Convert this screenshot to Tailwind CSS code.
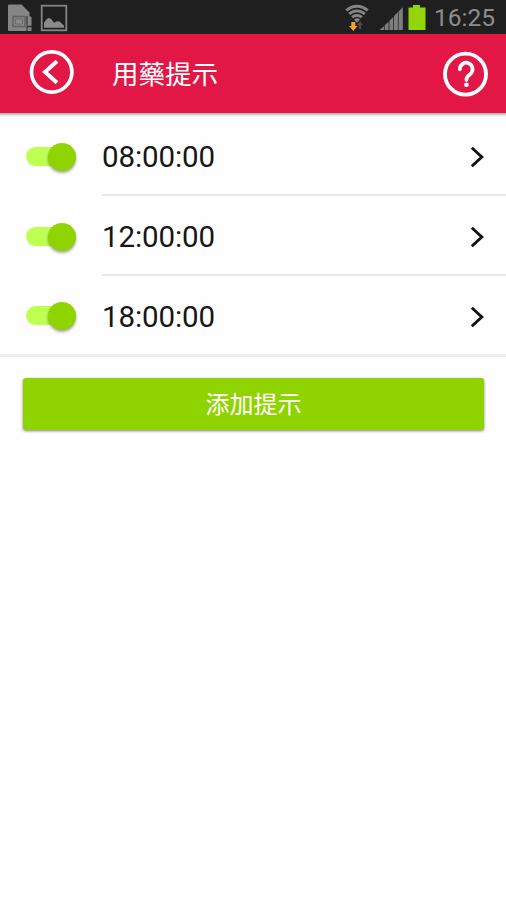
<!DOCTYPE html>
<html lang="zh-Hant">
<head>
<meta charset="utf-8">
<title>用藥提示</title>
<script src="https://cdn.jsdelivr.net/npm/@tailwindcss/browser@4"></script>
</head>
<body class="bg-white">
<div class="flex h-[900px] w-[506px] flex-col overflow-hidden bg-[#fefefe] font-['Roboto','Noto_Sans_CJK_TC',sans-serif]">
  <!-- Status bar -->
  <div class="flex h-[34px] shrink-0 items-start bg-[#1f1f20] pl-[7px]">
    <svg class="mt-[3px] h-[30px] w-[64px]" viewBox="7 3 64 30">
      <path d="M9 4.500h12.500l8 8V16l2 1v14H9a1 1 0 0 1-1-1V5.500a1 1 0 0 1 1-1z" fill="#858585"/>
      <path d="M13 16.500h12v10H13z" fill="#858585" stroke="#626262" stroke-width="1.500"/>
      <path d="M15.500 19h7v5h-7z" fill="#8c8c8c" stroke="#6a6a6a" stroke-width="1"/>
      <path d="M27 16v9.500" stroke="#404040" stroke-width="1.300"/>
      <path d="M26.500 26.500h5.500" stroke="#303030" stroke-width="1.400"/>
      <path d="M27 27v4" stroke="#303030" stroke-width="1"/>
      <rect x="41.700" y="5.700" width="24.600" height="24.600" fill="none" stroke="#858585" stroke-width="1.800"/>
      <path d="M44 27.800v-5l3-4 2-.800 2 .800 3 4 3-1.500 3 .500 4 4v2z" fill="#8a8a8a"/>
    </svg>
    <svg class="ml-auto mt-[3px] h-[30px] w-[90px]" viewBox="340 3 90 30">
      <g fill="none" stroke="#858585" stroke-width="2.900">
        <path d="M346.300 10.500a15.500 15.500 0 0 1 21.400 0"/>
        <path d="M349.200 14a11.200 11.200 0 0 1 15.600 0"/>
        <path d="M352.200 17.300a7 7 0 0 1 9.600 0"/>
      </g>
      <path d="M354 19.500a4.600 4.600 0 0 1 6 0l-3 3.200z" fill="#858585"/>
      <path d="M351.300 22h4v4h2.200l-4.200 5-4.200-5h2.200z" fill="#f5a12c"/>
      <path d="M358.800 29v-4h-1.800l3-3.800 3 3.800h-1.800v4z" fill="#4a4a4a"/>
      <g fill="#7e7e7e">
        <path d="M379.500 30l4.500-3.700V30zM384.700 25.300l3.900-3.500V30h-3.900zM389.400 20.800l3.900-3.800v13h-3.900zM394 16l3.900-3.900V30H394zM398.600 11.400l4.200-4.100V30h-4.200z"/>
      </g>
      <path d="M413 5h7v2.500h5.500V30h-17V7.500h4.500z" fill="#94d40b"/>
    </svg>
    <div class="ml-[4px] w-[72px] text-[24.500px] leading-[36px] text-[#8d8d8d]">16:25</div>
  </div>

  <!-- App bar -->
  <header class="z-10 flex h-[79px] shrink-0 items-center bg-[#e21745] pl-[29px] pr-[17px] shadow-[0_1px_2px_1px_rgba(60,75,50,0.4)]">
    <svg class="-mt-[3px] size-[46px]" viewBox="0 0 46 46" fill="none" stroke="#fff">
      <circle cx="22.700" cy="23" r="20.200" stroke-width="3.700"/>
      <path d="M28 12.200L16 23l12 10.800" stroke-width="3.900"/>
    </svg>
    <h1 class="ml-[37px] pt-[2px] text-[26.500px] leading-[40px] text-white">用藥提示</h1>
    <svg class="ml-auto size-[46px]" viewBox="0 0 46 46" fill="none" stroke="#fff">
      <circle cx="22.500" cy="23.200" r="20.500" stroke-width="3.800"/>
      <path d="M16.800 18.300a6.400 6.400 0 1 1 10.500 4.800c-2.200 1.800-3.900 2.700-3.900 5.700" stroke-width="3.700" stroke-linecap="round"/>
      <circle cx="23.400" cy="33.800" r="2.300" fill="#fff" stroke="none"/>
    </svg>
  </header>

  <!-- Reminder times -->
  <ul class="shrink-0 border-b-[3px] border-[#eeeeee] pt-[2px]">
    <li class="flex h-[81px] pl-[26px]">
      <div class="mt-[32px] flex h-[19px] w-[50px] items-center justify-end rounded-full bg-[#beff52]">
        <span class="size-[28px] shrink-0 rounded-full bg-[#8fd300] shadow-[0_2px_3px_rgba(0,0,0,0.35)]"></span>
      </div>
      <div class="ml-[26px] flex flex-1 items-center justify-between border-b-2 border-[#e8e8e8] pr-[21px] pt-[5px]">
        <span class="text-[29.500px] leading-[40px] tracking-[-0.1px] text-[#161616]">08:00:00</span>
        <svg class="h-[22px] w-[15px]" viewBox="0 0 15 22" fill="none" stroke="#111" stroke-width="2.900"><path d="M1.800 1.700L11.800 11 1.800 20.300"/></svg>
      </div>
    </li>
    <li class="flex h-[80px] pl-[26px]">
      <div class="mt-[31px] flex h-[19px] w-[50px] items-center justify-end rounded-full bg-[#beff52]">
        <span class="size-[28px] shrink-0 rounded-full bg-[#8fd300] shadow-[0_2px_3px_rgba(0,0,0,0.35)]"></span>
      </div>
      <div class="ml-[26px] flex flex-1 items-center justify-between border-b-2 border-[#e8e8e8] pr-[21px] pt-[4px]">
        <span class="text-[29.500px] leading-[40px] tracking-[-0.1px] text-[#161616]">12:00:00</span>
        <svg class="h-[22px] w-[15px]" viewBox="0 0 15 22" fill="none" stroke="#111" stroke-width="2.900"><path d="M1.800 1.700L11.800 11 1.800 20.300"/></svg>
      </div>
    </li>
    <li class="flex h-[78px] pl-[26px]">
      <div class="mt-[30px] flex h-[19px] w-[50px] items-center justify-end rounded-full bg-[#beff52]">
        <span class="size-[28px] shrink-0 rounded-full bg-[#8fd300] shadow-[0_2px_3px_rgba(0,0,0,0.35)]"></span>
      </div>
      <div class="ml-[26px] flex flex-1 items-center justify-between pr-[21px] pt-[4px]">
        <span class="text-[29.500px] leading-[40px] tracking-[-0.1px] text-[#161616]">18:00:00</span>
        <svg class="h-[22px] w-[15px]" viewBox="0 0 15 22" fill="none" stroke="#111" stroke-width="2.900"><path d="M1.800 1.700L11.800 11 1.800 20.300"/></svg>
      </div>
    </li>
  </ul>

  <button class="ml-[23px] mt-[21px] h-[52px] w-[461px] shrink-0 rounded-[3px] bg-[#8fd300] pt-[2px] text-[24px] leading-[50px] text-white shadow-[0_1px_3px_rgba(0,0,0,0.5)]">添加提示</button>
</div>
</body>
</html>
